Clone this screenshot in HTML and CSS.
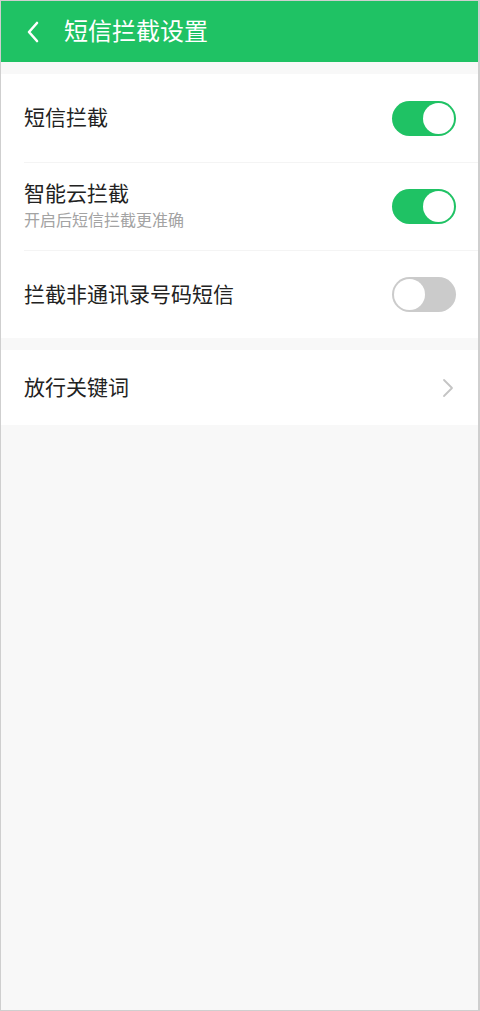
FILE: index.html
```html
<!DOCTYPE html>
<html lang="zh-CN">
<head>
<meta charset="utf-8">
<title>短信拦截设置</title>
<link rel="stylesheet" href="styles.css">
</head>
<body>
<div class="screen">
  <header class="topbar">
    <svg class="back" width="16" height="24" viewBox="0 0 16 24"><path d="M12 3 L4 12 L12 21" fill="none" stroke="#fff" stroke-width="2.6" stroke-linecap="round" stroke-linejoin="round"/></svg>
    <h1 class="title">短信拦截设置</h1>
  </header>
  <div class="spacer"></div>
  <section class="group">
    <div class="row">
      <div class="label">短信拦截</div>
      <div class="switch on"><span class="knob"></span></div>
    </div>
    <div class="row">
      <div class="texts">
        <div class="label">智能云拦截</div>
        <div class="sub">开启后短信拦截更准确</div>
      </div>
      <div class="switch on"><span class="knob"></span></div>
    </div>
    <div class="row">
      <div class="label">拦截非通讯录号码短信</div>
      <div class="switch off"><span class="knob"></span></div>
    </div>
  </section>
  <section class="group gap">
    <div class="row short">
      <div class="label">放行关键词</div>
      <svg class="chev" width="12" height="20" viewBox="0 0 12 20"><path d="M2 2 L10 10 L2 18" fill="none" stroke="#c4c4c4" stroke-width="1.8" stroke-linecap="round" stroke-linejoin="round"/></svg>
    </div>
  </section>
</div>
</body>
</html>
```
FILE: styles.css
```css
* { box-sizing: border-box; }
html, body { margin: 0; padding: 0; }
body {
  font-family: "Noto Sans CJK SC", "Noto Sans", sans-serif;
  background: #fff;
}
.screen {
  width: 480px;
  height: 1011px;
  border: 1px solid #cfcfcf;
  border-right-width: 2px;
  background: #f8f8f8;
  overflow: hidden;
}
.topbar {
  height: 61px;
  background: #1fc264;
  display: flex;
  align-items: center;
  padding-left: 24px;
}
.back { display: block; }
.title {
  margin: 0 0 0 23px;
  padding-bottom: 4px;
  font-size: 24px;
  font-weight: 400;
  color: #fff;
  line-height: 30px;
}
.spacer { height: 12px; }
.group { background: #fff; }
.group.gap { margin-top: 12px; }
.row {
  height: 88px;
  margin-left: 23px;
  padding-right: 22px;
  display: flex;
  align-items: center;
  justify-content: space-between;
  border-top: 1px solid #f4f4f4;
}
.row:first-child { border-top: none; }
.row.short { height: 75px; }
.label {
  font-size: 21px;
  color: #222;
  line-height: 28px;
  padding-bottom: 4px;
}
.texts {
  display: flex;
  flex-direction: column;
  padding-bottom: 5px;
}
.texts .label { line-height: 26px; padding-bottom: 0; }
.sub {
  font-size: 16px;
  color: #a3a3a3;
  line-height: 20px;
  margin-top: 4px;
}
.switch {
  width: 64px;
  height: 35px;
  border-radius: 18px;
  display: flex;
  align-items: center;
  padding: 2px;
}
.switch.on { background: #1fc264; justify-content: flex-end; }
.switch.off { background: #cbcbcb; justify-content: flex-start; }
.knob {
  width: 31px;
  height: 31px;
  border-radius: 50%;
  background: #fff;
}
.chev { display: block; margin-right: 2px; }
```
